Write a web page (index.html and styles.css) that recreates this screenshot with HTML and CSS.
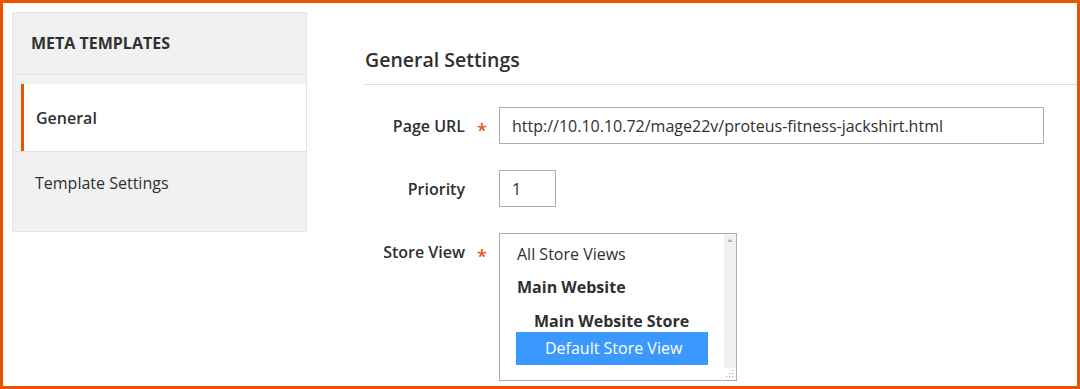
FILE: index.html
```html
<!DOCTYPE html>
<html lang="en">
<head>
<meta charset="utf-8">
<title>Meta Templates - General</title>
<link rel="stylesheet" href="styles.css">
</head>
<body>
<div class="frame">
  <aside class="sidebar">
    <div class="nav-title">META TEMPLATES</div>
    <ul class="nav-list">
      <li class="nav-item active">General</li>
      <li class="nav-item">Template Settings</li>
    </ul>
  </aside>
  <main class="content">
    <h2 class="section-title">General Settings</h2>
    <div class="form">
      <div class="row">
        <label class="label">Page URL</label>
        <span class="req">*</span>
        <div class="control"><input class="input input-url" type="text" value="http://10.10.10.72/mage22v/proteus-fitness-jackshirt.html"></div>
      </div>
      <div class="row">
        <label class="label">Priority</label>
        <span class="req"></span>
        <div class="control"><input class="input input-small" type="text" value="1"></div>
      </div>
      <div class="row">
        <label class="label">Store View</label>
        <span class="req">*</span>
        <div class="control">
          <div class="multiselect" role="listbox">
            <div class="options">
              <div class="opt">All Store Views</div>
              <div class="opt group">Main Website</div>
              <div class="opt group sub">Main Website Store</div>
              <div class="opt selected">Default Store View</div>
            </div>
            <div class="scrollbar">
              <div class="track"><span class="arrow"></span></div>
              <div class="grip">
                <svg width="8" height="8" viewBox="0 0 8 8"><g fill="#9a9a9a"><rect x="6" y="0" width="1" height="1"/><rect x="3" y="3" width="1" height="1"/><rect x="6" y="3" width="1" height="1"/><rect x="0" y="6" width="1" height="1"/><rect x="3" y="6" width="1" height="1"/><rect x="6" y="6" width="1" height="1"/></g></svg>
              </div>
            </div>
          </div>
        </div>
      </div>
    </div>
  </main>
</div>
</body>
</html>
```
FILE: styles.css
```css
* { box-sizing: border-box; }
html, body { margin: 0; padding: 0; }
body {
  font-family: "Open Sans", "Noto Sans", sans-serif;
  color: #303030;
  background: #fff;
}
.frame {
  width: 1080px;
  height: 389px;
  border: 3px solid #eb5202;
  display: flex;
  align-items: flex-start;
  padding: 9px 0 0 9px;
  overflow: hidden;
}
.sidebar {
  flex: none;
  width: 295px;
  background: #f1f1f1;
  border: 1px solid #e3e3e3;
}
.nav-title {
  height: 62px;
  line-height: 61px;
  padding-left: 18px;
  font-size: 16px;
  font-weight: 700;
  color: #303030;
  border-bottom: 1px solid #e3e3e3;
}
.nav-list {
  list-style: none;
  margin: 9px 0 0 0;
  padding: 0;
}
.nav-item {
  font-size: 16px;
  line-height: 22px;
  color: #303030;
}
.nav-item.active {
  margin-left: 8px;
  height: 67px;
  background: #fff;
  border-left: 3px solid #eb5202;
  padding: 23px 0 0 12px;
  font-weight: 600;
}
.nav-item:not(.active) {
  height: 80px;
  border-top: 1px solid #e3e3e3;
  padding: 20px 0 0 22px;
}
.content {
  flex: 1;
  margin-left: 58px;
}
.section-title {
  margin: 34px 0 0 0;
  font-size: 19.5px;
  line-height: 28px;
  font-weight: 600;
  color: #303030;
  padding-bottom: 10px;
  border-bottom: 1px solid #e0dcd8;
}
.form {
  margin-top: 22px;
  padding-right: 33px;
  display: flex;
  flex-direction: column;
  gap: 26px;
}
.row {
  display: grid;
  grid-template-columns: 100px 34px 1fr;
  align-items: start;
}
.label {
  text-align: right;
  font-size: 16px;
  font-weight: 600;
  line-height: 36px;
  height: 37px;
  padding-top: 1px;
  color: #303030;
}
.req {
  display: block;
  height: 37px;
  color: #e8531a;
  font-size: 18px;
  font-weight: 600;
  line-height: 37px;
  padding-top: 5px;
  padding-left: 12px;
  overflow: visible;
}
.input {
  display: block;
  height: 37px;
  border: 1px solid #adadad;
  padding: 0 12px;
  font-family: "Open Sans", "Noto Sans", sans-serif;
  font-size: 16px;
  color: #303030;
  background: #fff;
  border-radius: 0;
  outline: none;
}
.input-url { width: 100%; }
.input-small { width: 57px; }
.multiselect {
  width: 238px;
  height: 148px;
  border: 1px solid #adadad;
  display: flex;
  background: #fff;
}
.options {
  flex: 1;
  padding-top: 4px;
}
.opt {
  font-size: 16px;
  height: 33px;
  line-height: 33px;
  padding-left: 17px;
  white-space: nowrap;
  color: #303030;
}
.opt.group { font-weight: 700; }
.opt.sub {
  height: 28px;
  line-height: 22px;
  padding-top: 6px;
  padding-left: 34px;
}
.opt.selected {
  margin-left: 16px;
  width: 192px;
  padding-left: 29px;
  background: #3a98ff;
  color: #fff;
}
.scrollbar {
  flex: none;
  width: 12px;
  display: flex;
  flex-direction: column;
}
.track {
  flex: 1;
  background: #f1f1f1;
  display: flex;
  justify-content: center;
  padding-top: 5px;
}
.arrow {
  width: 0;
  height: 0;
  border-left: 3px solid transparent;
  border-right: 3px solid transparent;
  border-bottom: 3px solid #b5b5b5;
}
.grip {
  height: 12px;
  display: flex;
  align-items: flex-end;
  justify-content: flex-end;
  padding: 0 2px 2px 0;
}
.grip svg { display: block; }
```
